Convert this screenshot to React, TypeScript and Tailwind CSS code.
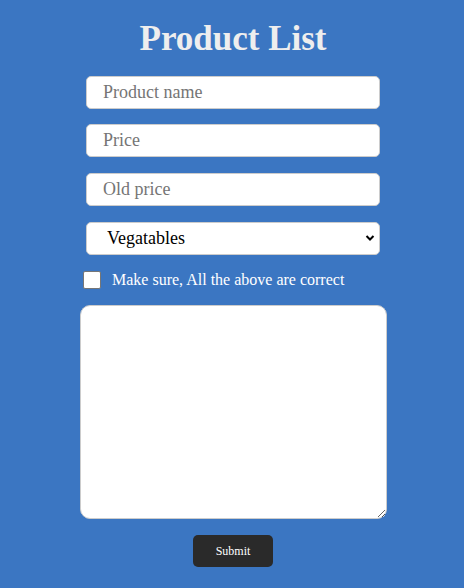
export default function App() {
  const field =
    "w-[294px] h-[33px] rounded-[5px] border border-[#cccccc] bg-white px-4 font-['Liberation_Serif',serif] text-[18px] text-black placeholder:text-[#757575] outline-none";

  return (
    <div className="min-h-[588px] w-full bg-[#3b76c2] pl-[2px] font-['Liberation_Serif',serif] flex flex-col items-center">
      {/* Title */}
      <h1 className="mt-[19px] text-[35px] leading-[40px] font-bold text-[#eeeeee]">Product List</h1>

      <form className="flex flex-col items-center mt-[17px]" onSubmit={(e) => e.preventDefault()}>
        <input type="text" placeholder="Product name" className={field} />
        <input type="text" placeholder="Price" className={"mt-[15px] " + field} />
        <input type="text" placeholder="Old price" className={"mt-[16px] " + field} />
        <div className="relative mt-[16px] w-[294px] h-[33px]">
          <select
            defaultValue="veg"
            className="appearance-none w-full h-full rounded-[5px] border border-[#cccccc] bg-white pl-5 pr-8 font-['Liberation_Serif',serif] text-[18px] text-black outline-none"
          >
            <option value="veg">Vegatables</option>
            <option value="fruits">Fruits</option>
          </select>
          <svg
            className="pointer-events-none absolute right-[5px] top-[12px]"
            width="10"
            height="8"
            viewBox="0 0 10 8"
          >
            <path d="M1.5 2 L5 5.5 L8.5 2" stroke="#000" strokeWidth="2" fill="none" />
          </svg>
        </div>

        {/* Confirmation */}
        <label className="mt-[16px] w-[300px] h-[18px] flex items-center gap-[11px] text-[16px] leading-[18px] text-white">
          <input
            type="checkbox"
            className="appearance-none w-[18px] h-[18px] rounded-[2px] border border-[#767676] bg-white shrink-0"
          />
          <span>Make sure, All the above are correct</span>
        </label>

        <textarea className="mt-[16px] w-[307px] h-[214px] rounded-[10px] border border-[#cccccc] bg-white p-2 font-['Liberation_Serif',serif] text-[16px] outline-none" />

        <button
          type="submit"
          className="mt-[16px] w-[80px] h-[32px] rounded-[5px] bg-[#2a2a2a] font-['Liberation_Serif',serif] text-white text-[12px]"
        >
          Submit
        </button>
      </form>
    </div>
  );
}
